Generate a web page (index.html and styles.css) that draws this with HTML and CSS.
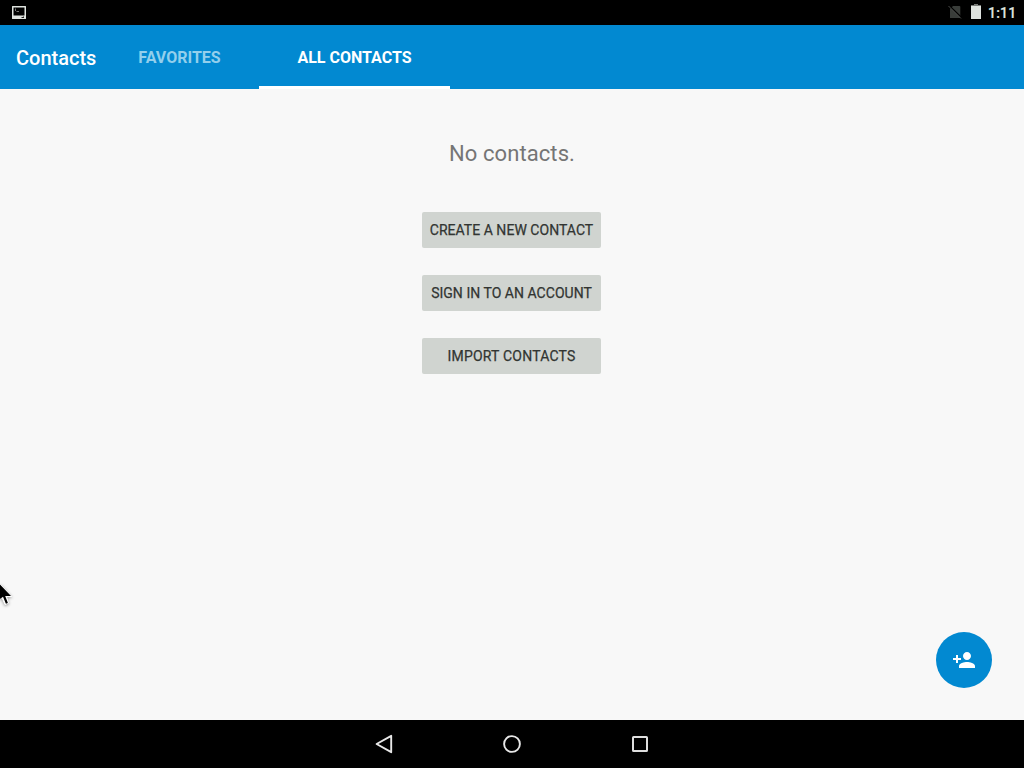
FILE: index.html
```html
<!DOCTYPE html>
<html lang="en">
<head>
<meta charset="utf-8">
<title>Contacts</title>
<link rel="stylesheet" href="styles.css">
</head>
<body>
<div class="screen">
  <header class="status-bar">
    <svg class="status-shot" width="16" height="16" viewBox="0 0 16 16"><path fill="#dfe3df" fill-rule="evenodd" d="M1.500 1h13q.5 0 .5.5v12q0 .5-.5.5h-13q-.5 0-.5-.5v-12q0-.5.5-.5zM2.500 2.500v8h11v-8z"/><path d="M4.500 3.500v2.500M5.500 6.500h2.500" fill="none" stroke="#777" stroke-width="1"/><path d="M10.500 12.500h1.500M12.500 11.500v1.500" stroke="#222"/></svg>
    <div class="status-right">
      <svg class="no-sim" width="14" height="16" viewBox="0 0 14 16"><path fill="#393d3a" d="M5 2h6.500q.8 0 .8 1v11H2V5z"/><path d="M.8 1.200 13.500 13.500" stroke="#000" stroke-width="1.500"/><path d="M.5 2 13 14.500" stroke="#4a4d4a" stroke-width="1"/></svg>
      <svg class="battery" width="10" height="16" viewBox="0 0 10 16"><path fill="#777a77" d="M3 0h4v1h3v1H0V1h3z"/><path fill="#dfe3df" d="M0 2h10v13H0z"/></svg>
      <span class="clock">1:11</span>
    </div>
  </header>
  <nav class="app-bar">
    <h1 class="title">Contacts</h1>
    <div class="tab tab-favorites"><span>FAVORITES</span></div>
    <div class="tab tab-all"><span>ALL CONTACTS</span></div>
  </nav>
  <main class="content">
    <p class="empty">No contacts.</p>
    <div class="actions">
      <button class="action create">CREATE A NEW CONTACT</button>
      <button class="action sign-in">SIGN IN TO AN ACCOUNT</button>
      <button class="action import">IMPORT CONTACTS</button>
    </div>
    <div class="fab"><svg width="24" height="24" viewBox="0 0 24 24"><path fill="#fff" d="M15 12c2.210 0 4-1.790 4-4s-1.790-4-4-4-4 1.790-4 4 1.790 4 4 4zm-9-2V7H4v3H1v2h3v3h2v-3h3v-2H6zm9 4c-2.670 0-8 1.340-8 4v2h16v-2c0-2.660-5.330-4-8-4z"/></svg></div>
  </main>
  <footer class="nav-bar">
    <svg width="24" height="24" viewBox="0 0 24 24"><path d="M4.600 12 19.200 3.800v16.400z" fill="none" stroke="#e8e8e8" stroke-width="1.900" stroke-linejoin="round"/></svg>
    <svg width="24" height="24" viewBox="0 0 24 24"><circle cx="12" cy="12" r="7.900" fill="none" stroke="#e8e8e8" stroke-width="1.900"/></svg>
    <svg width="24" height="24" viewBox="0 0 24 24"><rect x="5" y="5" width="14" height="14" rx=".6" fill="none" stroke="#dedede" stroke-width="2"/></svg>
  </footer>
  <svg class="pointer" width="20" height="36" viewBox="0 0 20 36"><path d="M-6 9-3 26 2 22.500 5 29.500 8.500 28 6.500 21.500H11.500L0 9z" fill="#fff" stroke="#fff" stroke-width="1"/><path d="M-4 9.500H0L11 21H5.200l2.700 7-2 .8L3 21.800-3 26z" fill="#000"/></svg>
</div>
</body>
</html>
```

FILE: styles.css
```css
* { box-sizing: border-box; }
body { margin: 0; font-family: Roboto, sans-serif; }
.screen { position: relative; width: 1024px; height: 768px; display: flex; flex-direction: column; overflow: hidden; background: #f8f8f8; }
.status-bar { height: 25px; flex: none; display: flex; justify-content: space-between; align-items: flex-start; padding: 5px 9px 0 11px; background: #000; }
.status-right { display: flex; margin-top: -1px; }
.battery { margin-left: 9px; }
.clock { margin-left: 7px; color: #dfe3df; font-size: 14px; line-height: 18px; font-weight: 500; letter-spacing: .2px; -webkit-text-stroke: .2px #dfe3df; width: 27px; white-space: nowrap; }
.app-bar { height: 64px; flex: none; display: flex; background: #0289d1; color: #fff; }
.title { width: 100px; margin: 0; padding-left: 16px; font-size: 20px; line-height: 66px; font-weight: 500; }
.tab { height: 64px; text-align: center; font-size: 16px; line-height: 65px; font-weight: 700; white-space: nowrap; }
.tab-favorites { width: 159px; color: #93cfec; }
.tab-all { width: 191px; border-bottom: 3px solid #fff; }
.content { position: relative; flex: 1; display: flex; flex-direction: column; align-items: center; }
.empty { margin: 51px 0 0; height: 28px; line-height: 28px; font-size: 22px; letter-spacing: .08px; color: #757575; }
.actions { width: 179px; margin: 44px 1px 0 0; display: flex; flex-direction: column; gap: 27px; }
.action { height: 36px; padding: 0; border: 0; border-radius: 2px; background: #d0d4d0; color: #323532; font: 400 14px/36px Roboto, sans-serif; letter-spacing: .03px; -webkit-text-stroke: .25px #323532; white-space: nowrap; }
.import { letter-spacing: .2px; }
.fab { position: absolute; right: 32px; bottom: 32px; width: 56px; height: 56px; border-radius: 50%; background: #0289d1; display: flex; align-items: center; justify-content: center; }
.nav-bar { height: 48px; flex: none; background: #000; display: flex; align-items: center; justify-content: center; gap: 104px; }
.pointer { position: absolute; left: 0; top: 575px; filter: drop-shadow(0 1px 1.5px rgba(0,0,0,.4)); }
```
